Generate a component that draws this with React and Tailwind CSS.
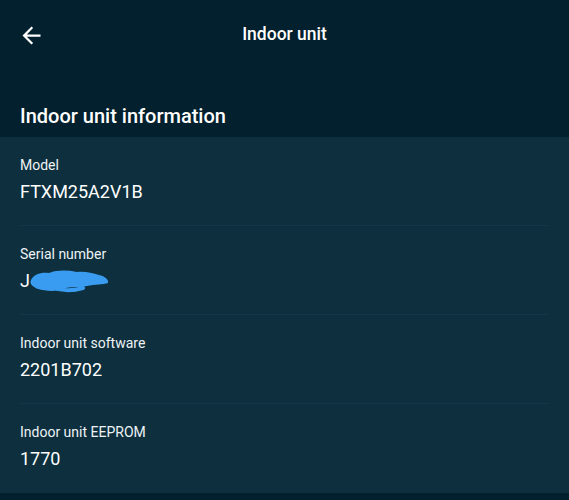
import { useState } from 'react';

const rows = [
  { label: 'Model', value: 'FTXM25A2V1B' },
  { label: 'Serial number', value: 'J', hidden: true },
  { label: 'Indoor unit software', value: '2201B702' },
  { label: 'Indoor unit EEPROM', value: '1770' },
];

function BackArrow() {
  return (
    <svg width="27" height="27" viewBox="0 0 24 24" fill="#ffffff">
      <path d="M20 11H7.83l5.59-5.59L12 4l-8 8 8 8 1.41-1.41L7.83 13H20v-2z" />
    </svg>
  );
}

// hand-drawn marker stroke covering part of the serial
function Scribble() {
  return (
    <svg className="absolute left-[9px] top-[-2px]" width="82" height="26" viewBox="0 0 82 26">
      <path
        d="M2 13 C5 7 12 5 20 6 C28 3 38 3 48 5 C56 4 63 6 70 8 C75 9 80 12 79 16 C74 18 66 17 58 19 C50 21 42 19 34 22 C26 25 16 24 9 22 C4 20 0 17 2 13 Z"
        fill="#3a9cf0"
      />
      <path d="M22 20 C32 24 44 24 54 21" stroke="#3a9cf0" strokeWidth="4" fill="none" strokeLinecap="round" />
    </svg>
  );
}

export default function App() {
  const [unit] = useState('Indoor unit');

  return (
    <div className="w-[569px] h-[500px] bg-[#02202d] text-white overflow-hidden" style={{ fontFamily: 'Roboto, "Noto Sans", sans-serif' }}>
      {/* Top bar */}
      <div className="relative h-[68px] flex items-center justify-center">
        <button className="absolute left-[18px] top-[22px]">
          <BackArrow />
        </button>
        <h1 className="text-[17.5px] font-medium">{unit}</h1>
      </div>

      {/* Section heading */}
      <div className="px-5 pt-[34px] pb-[7px]">
        <h2 className="text-[20px] leading-[28px] font-medium">Indoor unit information</h2>
      </div>

      {/* Info list */}
      <div className="bg-[#0d2f3e]">
        {rows.map((row, i) => (
          <div key={row.label} className="px-5">
            <div className={`h-[89px] pt-[18px] ${i < rows.length - 1 ? 'border-b border-[#123848]' : ''}`}>
              <p className="text-[14px] leading-[20px] text-[#eef3f5]">{row.label}</p>
              <p className="mt-[5px] text-[18px] leading-[24px]">
                {row.hidden ? (
                  <span className="relative inline-block">
                    {row.value}
                    <Scribble />
                  </span>
                ) : (
                  row.value
                )}
              </p>
            </div>
          </div>
        ))}
      </div>
    </div>
  );
}
